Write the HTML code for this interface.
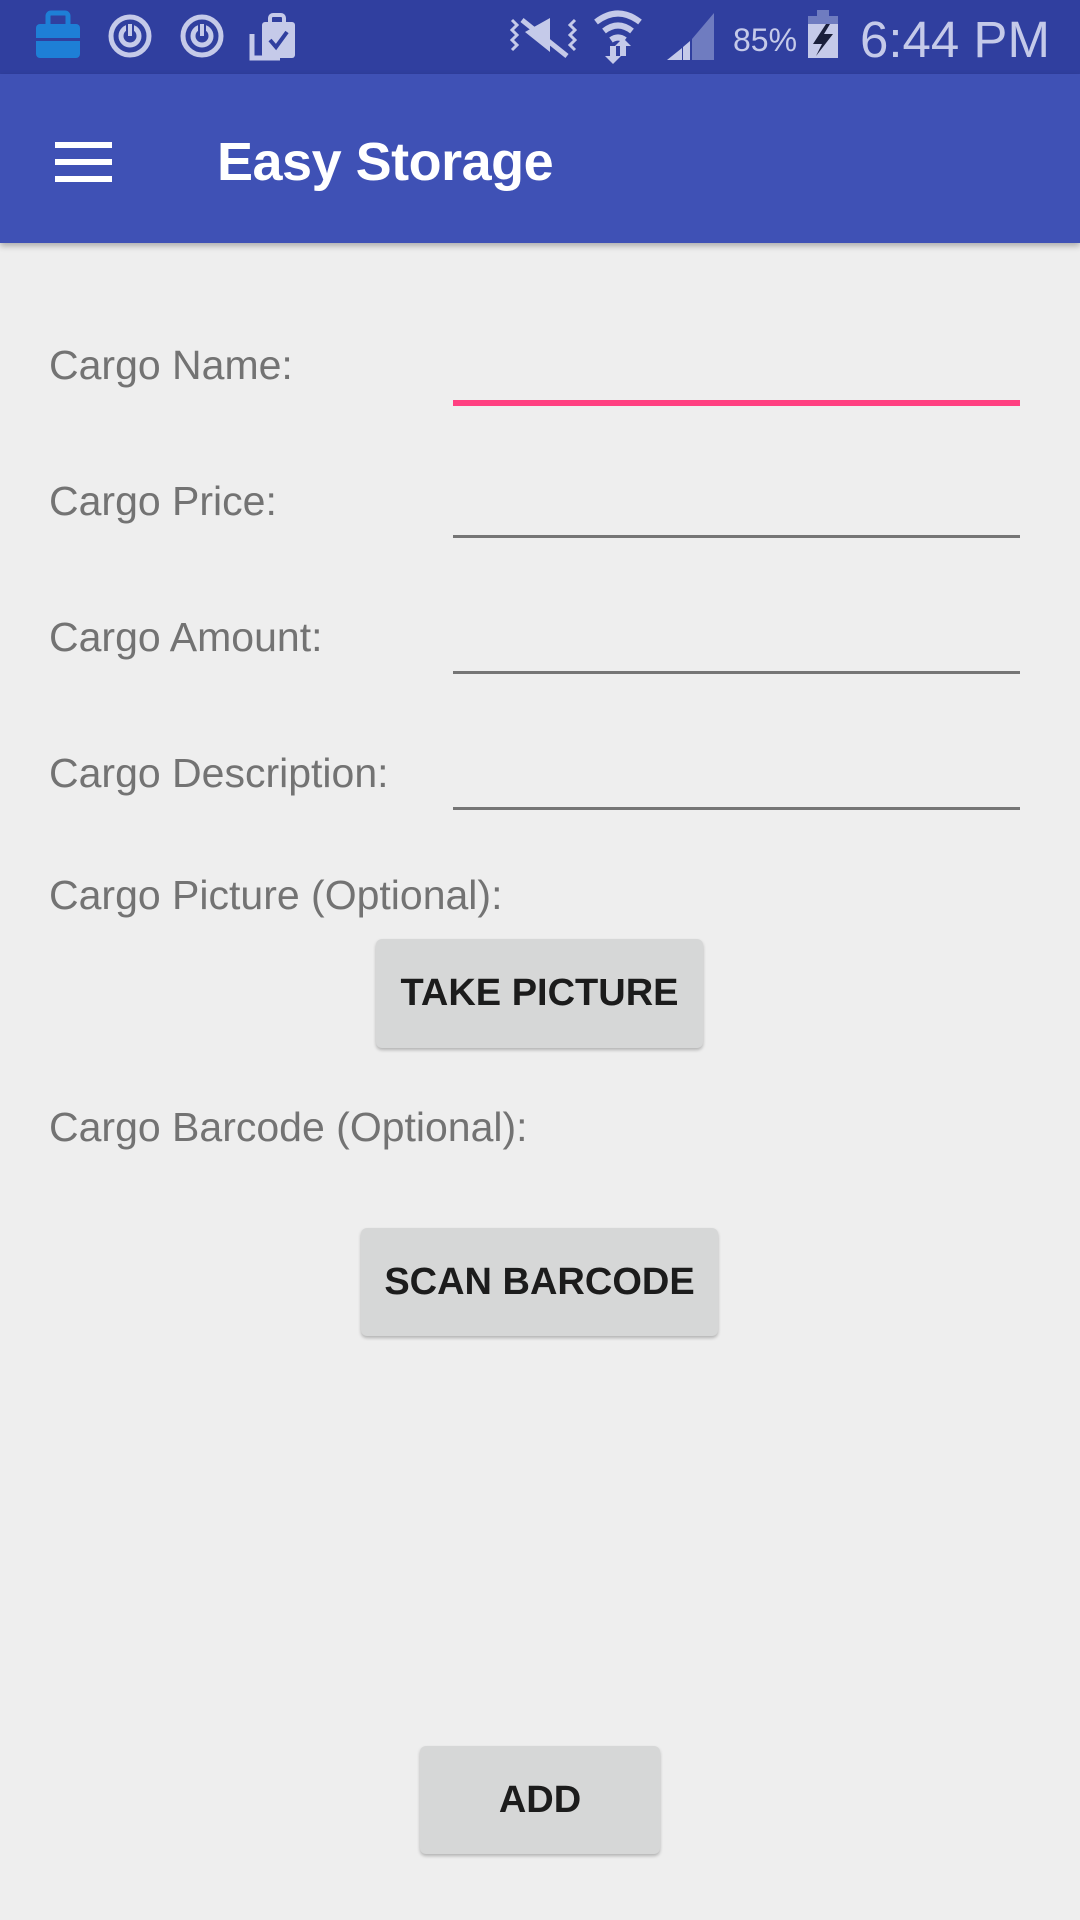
<!DOCTYPE html>
<html><head><meta charset="utf-8">
<style>
*{margin:0;padding:0;box-sizing:border-box}
body{width:1080px;height:1920px;background:#eeeeee;position:relative;overflow:hidden;font-family:"Liberation Sans",Roboto,sans-serif}
.sb{position:absolute;left:0;top:0;width:1080px;height:74px;background:#303f9f}
.ab{position:absolute;left:0;top:74px;width:1080px;height:169px;background:#3f51b5;box-shadow:0 3px 6px rgba(0,0,0,.28)}
.bar{position:absolute;left:55px;width:57px;height:6px;background:#fff}
.title{position:absolute;left:217px;top:162px;font-size:54px;font-weight:bold;color:#fff;line-height:0;letter-spacing:-0.5px}
.lbl{position:absolute;left:49px;font-size:41px;color:#737373;line-height:0}
.line{position:absolute;left:453px;width:567px;height:3px;background:#757575}
.btn{position:absolute;background:#d6d7d7;border-radius:6px;box-shadow:0 2px 3px rgba(0,0,0,.25);display:flex;align-items:center;justify-content:center;font-size:38px;font-weight:bold;color:#1c1c1c}
.st{position:absolute;color:#c5cae9;line-height:0}
</style></head><body>
<div class="sb"></div>
<svg style="position:absolute;left:0;top:0" width="1080" height="74">
 <rect x="36" y="24" width="44" height="34" rx="4" fill="#1e7fd6"/>
 <rect x="48" y="13" width="20" height="14" rx="3" fill="none" stroke="#1e7fd6" stroke-width="5"/>
 <rect x="36" y="38" width="44" height="3" fill="#303f9f"/>
 <g fill="none" stroke="#c5cae9" stroke-width="5">
  <circle cx="130" cy="36" r="19"/><circle cx="130" cy="36" r="9"/>
  <circle cx="202" cy="36" r="19"/><circle cx="202" cy="36" r="9"/>
 </g>
 <rect x="126" y="22" width="8" height="14" fill="#303f9f"/><rect x="128" y="24" width="4" height="12" fill="#c5cae9"/>
 <rect x="198" y="22" width="8" height="14" fill="#303f9f"/><rect x="200" y="24" width="4" height="12" fill="#c5cae9"/>
 <rect x="262" y="22" width="33" height="36" rx="3" fill="#c5cae9"/>
 <rect x="270" y="15" width="14" height="10" rx="3" fill="none" stroke="#c5cae9" stroke-width="4"/>
 <path d="M252 34 V58 H280" fill="none" stroke="#c5cae9" stroke-width="5"/>
 <path d="M270 40 L276 47 L287 32" fill="none" stroke="#303f9f" stroke-width="4"/>
 <g fill="#c5cae9">
  <path d="M525 32 L550 18 L550 52 Z"/>
 </g>
 <path d="M522 20 L567 56" stroke="#c5cae9" stroke-width="5"/>
 <path d="M512 20 l5 5 l-5 5 l5 5 l-5 5 l5 5 l-5 5 M575 20 l-5 5 l5 5 l-5 5 l5 5 l-5 5 l5 5" fill="none" stroke="#c5cae9" stroke-width="3"/>
 <g fill="none" stroke="#c5cae9" stroke-width="6">
  <path d="M596 22 Q618 5 640 22"/><path d="M604 31 Q618 20 632 31"/><path d="M611 40 Q618 35 625 40"/>
 </g>
 <path d="M610 46 v10 h-5 l8 8 l8 -8 h-5 v-10 Z M620 56 v-10 h-5 l8 -8 l8 8 h-5 v10 Z" fill="#c5cae9"/>
 <path d="M667 60 L682 48 V60 Z M683 60 V47 L690 41 V60 Z" fill="#c5cae9"/>
 <path d="M692 60 V39 L714 13 V60 Z" fill="#6f7cc0"/>
 <rect x="817" y="10" width="12" height="6" fill="#6f7cc0"/>
 <rect x="808" y="16" width="30" height="42" fill="#c5cae9"/>
 <rect x="808" y="16" width="30" height="8" fill="#6f7cc0"/>
 <path d="M826 24 L813 44 H822 L816 56 L833 34 H824 L830 24 Z" fill="#1a1f3a"/>
</svg>
<div class="st" style="left:733px;top:40px;font-size:32px">85%</div>
<div class="st" style="left:860px;top:40px;font-size:51px">6:44 PM</div>
<div class="ab"></div>
<div class="bar" style="top:142px"></div>
<div class="bar" style="top:159px"></div>
<div class="bar" style="top:176px"></div>
<div class="title">Easy Storage</div>

<div class="lbl" style="top:365px">Cargo Name:</div>
<div class="line" style="top:400px;height:6px;background:#ff4081"></div>
<div class="lbl" style="top:501px">Cargo Price:</div>
<div class="line" style="top:535px"></div>
<div class="lbl" style="top:637px">Cargo Amount:</div>
<div class="line" style="top:671px"></div>
<div class="lbl" style="top:773px">Cargo Description:</div>
<div class="line" style="top:807px"></div>
<div class="lbl" style="top:895px">Cargo Picture (Optional):</div>
<div class="btn" style="left:376px;top:939px;width:327px;height:109px">TAKE PICTURE</div>
<div class="lbl" style="top:1127px">Cargo Barcode (Optional):</div>
<div class="btn" style="left:361px;top:1228px;width:357px;height:108px">SCAN BARCODE</div>
<div class="btn" style="left:420px;top:1746px;width:240px;height:108px">ADD</div>
</body></html>
